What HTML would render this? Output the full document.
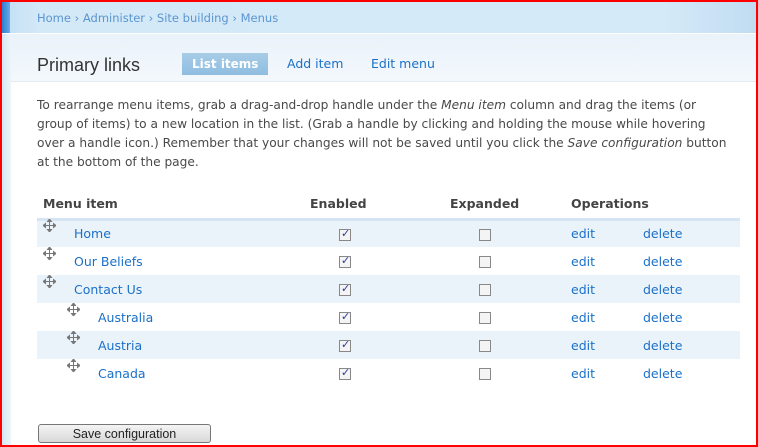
<!DOCTYPE html>
<html><head><meta charset="utf-8"><style>
*{margin:0;padding:0;box-sizing:border-box}
body{width:758px;height:447px;overflow:hidden;background:#fff;font-family:"DejaVu Sans","Liberation Sans",sans-serif;font-size:12px;color:#494949;position:relative}
#frame{position:absolute;left:0;top:0;width:758px;height:447px;border:2px solid #f00;z-index:10;pointer-events:none}
#hdr{position:absolute;left:2px;top:2px;width:754px;height:31px;background:linear-gradient(90deg,#c3dff4 0,#d4e9f8 40px,#d5eaf8 660px,#c0dcf2 100%)}
#hdrl{position:absolute;left:2px;top:2px;width:8px;height:31px;background:linear-gradient(90deg,#2a7fd4,#6aaae6)}
#crumb{position:absolute;left:37px;top:11px;font-size:11.5px;color:#5a95d0}
#sub{position:absolute;left:2px;top:34px;width:754px;height:48px;background:linear-gradient(#eaf2fa,#f3f8fc);border-bottom:1px solid #e3ebf2}
#side{position:absolute;left:2px;top:34px;width:9px;height:411px;background:linear-gradient(90deg,#d5e6f4,#edf4fa)}
h1{position:absolute;left:37px;top:55px;font-family:"Liberation Sans",sans-serif;font-size:18px;font-weight:normal;color:#333}
.tab{position:absolute;top:53px;height:22px;line-height:22px;font-size:12.5px;color:#1a70c8}
.tab.on{background:linear-gradient(#a7cce6,#8fbde0);color:#fff;font-weight:bold;padding:0 10px;left:182px;font-size:12px}
p{position:absolute;left:37px;top:96px;width:690px;line-height:19px;font-size:12.2px;color:#494949}
table{position:absolute;left:37px;top:195px;width:703px;border-collapse:collapse}
th{text-align:left;font-weight:bold;height:24px;color:#444;border-bottom:3px solid #d5e5f3;font-size:12.5px;vertical-align:top;padding-top:1px}
td{height:28px;font-size:12.5px}
tr.o td{background:#ebf3fa}
a{color:#1a70c8;text-decoration:none}
.h{display:inline-block;width:13px;height:13px;vertical-align:top;margin-top:-7px}
.cb{display:inline-block;width:12px;height:12px;border:1px solid #888;background:#f4f4f4;position:relative;vertical-align:middle}
.cb.c:after{content:"✓";position:absolute;left:1px;top:-3px;font-size:11px;color:#2a3a9a;font-weight:bold}
button{position:absolute;left:38px;top:424px;width:173px;height:19px;border:1px solid #777;border-radius:3px;background:linear-gradient(#f4f4f4,#d8d8d8);font-family:"Liberation Sans",sans-serif;font-size:12.5px;color:#222}
</style></head><body>
<svg width="0" height="0" style="position:absolute"><defs><symbol id="hd" viewBox="0 0 13 13"><path d="M6.5 1V12M1 6.5H12M6.5 0L4.5 2.5H8.5ZM6.5 13L4.5 10.5H8.5ZM0 6.5L2.5 4.5V8.5ZM13 6.5L10.5 4.5V8.5Z" stroke="#777" stroke-width="1" fill="#777"/></symbol></defs></svg>
<div id="hdr"></div><div id="hdrl"></div>
<div id="crumb">Home › Administer › Site building › Menus</div>
<div id="sub"></div><div id="side"></div>
<h1>Primary links</h1>
<div class="tab on">List items</div>
<div class="tab" style="left:287px">Add item</div>
<div class="tab" style="left:371px">Edit menu</div>
<p>To rearrange menu items, grab a drag-and-drop handle under the <i>Menu item</i> column and drag the items (or group of items) to a new location in the list. (Grab a handle by clicking and holding the mouse while hovering over a handle icon.) Remember that your changes will not be saved until you click the <i>Save configuration</i> button at the bottom of the page.</p>
<table>
<tr><th style="width:6px"></th><th style="width:267px;padding-left:0">Menu item</th><th style="width:140px">Enabled</th><th style="width:121px">Expanded</th><th>Operations</th></tr>
<tr class="o"><td colspan="2" style="padding-left:6px"><svg class="h"><use href="#hd"/></svg><a style="margin-left:18px" href="#">Home</a></td><td style="padding-left:29px"><span class="cb c"></span></td><td style="padding-left:29px"><span class="cb"></span></td><td><a href="#">edit</a><a href="#" style="margin-left:48px">delete</a></td></tr>
<tr><td colspan="2" style="padding-left:6px"><svg class="h"><use href="#hd"/></svg><a style="margin-left:18px" href="#">Our Beliefs</a></td><td style="padding-left:29px"><span class="cb c"></span></td><td style="padding-left:29px"><span class="cb"></span></td><td><a href="#">edit</a><a href="#" style="margin-left:48px">delete</a></td></tr>
<tr class="o"><td colspan="2" style="padding-left:6px"><svg class="h"><use href="#hd"/></svg><a style="margin-left:18px" href="#">Contact Us</a></td><td style="padding-left:29px"><span class="cb c"></span></td><td style="padding-left:29px"><span class="cb"></span></td><td><a href="#">edit</a><a href="#" style="margin-left:48px">delete</a></td></tr>
<tr><td colspan="2" style="padding-left:30px"><svg class="h"><use href="#hd"/></svg><a style="margin-left:18px" href="#">Australia</a></td><td style="padding-left:29px"><span class="cb c"></span></td><td style="padding-left:29px"><span class="cb"></span></td><td><a href="#">edit</a><a href="#" style="margin-left:48px">delete</a></td></tr>
<tr class="o"><td colspan="2" style="padding-left:30px"><svg class="h"><use href="#hd"/></svg><a style="margin-left:18px" href="#">Austria</a></td><td style="padding-left:29px"><span class="cb c"></span></td><td style="padding-left:29px"><span class="cb"></span></td><td><a href="#">edit</a><a href="#" style="margin-left:48px">delete</a></td></tr>
<tr><td colspan="2" style="padding-left:30px"><svg class="h"><use href="#hd"/></svg><a style="margin-left:18px" href="#">Canada</a></td><td style="padding-left:29px"><span class="cb c"></span></td><td style="padding-left:29px"><span class="cb"></span></td><td><a href="#">edit</a><a href="#" style="margin-left:48px">delete</a></td></tr>
</table>
<button>Save configuration</button>
<div id="frame"></div>
</body></html>
